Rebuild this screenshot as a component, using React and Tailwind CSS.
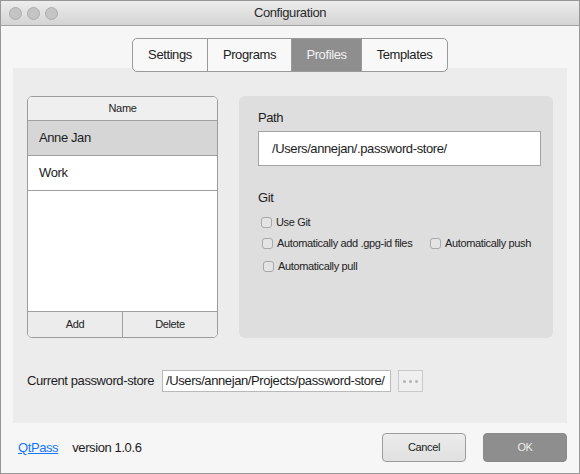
import React from "react";

function Check({ label, className = "" }) {
  return (
    <div className={"flex items-center h-[14px] " + className}>
      <span className="w-[11px] h-[11px] rounded-[3px] border border-[#a8a8a8] bg-[#e4e4e4] shrink-0" />
      <span className="ml-[4px] text-[11px] tracking-[-0.35px] text-[#222] leading-none">{label}</span>
    </div>
  );
}

export default function App() {
  const tabs = [
    { name: "Settings", w: "w-[74px]" },
    { name: "Programs", w: "w-[84px]" },
    { name: "Profiles", w: "w-[70px]", active: true },
    { name: "Templates", w: "w-[86px]" },
  ];
  return (
    <div className="w-[580px] h-[474px] bg-[#f6f6f6] border border-[#979797] flex flex-col overflow-hidden font-['Liberation_Sans',Arial,sans-serif] text-[#1c1c1c]">
      {/* title bar */}
      <div className="h-[25px] shrink-0 border-b border-[#a3a3a3] bg-gradient-to-b from-[#ededed] to-[#d4d4d4] grid grid-cols-[1fr_auto_1fr] items-center">
        <div className="flex items-center gap-[5px] pl-[8px]">
          <span className="w-[13px] h-[13px] rounded-full bg-[#c4c4c4] border border-[#acacac]" />
          <span className="w-[13px] h-[13px] rounded-full bg-[#c4c4c4] border border-[#acacac]" />
          <span className="w-[13px] h-[13px] rounded-full bg-[#c4c4c4] border border-[#acacac]" />
        </div>
        <div className="text-[13px] tracking-[-0.4px] text-[#2a2a2a]">Configuration</div>
        <div />
      </div>

      {/* tabs */}
      <div className="mt-[12px] flex justify-center relative z-10 shrink-0">
        <div className="flex h-[34px] border border-[#9a9a9a] rounded-[5px] overflow-hidden bg-[#f8f8f8]">
          {tabs.map((t, i) => (
            <div
              key={t.name}
              className={
                "flex items-center justify-center text-[13px] tracking-[-0.4px] " +
                t.w +
                (i > 0 ? " border-l border-[#9a9a9a]" : "") +
                (t.active ? " bg-[#8e8e8e] text-[#f2f2f2]" : " text-[#222]")
              }
            >
              {t.name}
            </div>
          ))}
        </div>
      </div>

      {/* pane */}
      <div className="-mt-[4px] mx-[12px] h-[355px] shrink-0 bg-[#ececec] px-[14px] pt-[28px] flex flex-col">
        <div className="flex gap-[21px] h-[242px]">
          {/* list */}
          <div className="w-[191px] h-full border border-[#9c9c9c] rounded-[5px] overflow-hidden flex flex-col bg-white">
            <div className="h-[24px] shrink-0 border-b border-[#a0a0a0] bg-[#efefef] flex items-center justify-center text-[11px] tracking-[-0.35px] text-[#222]">
              Name
            </div>
            <div className="h-[35px] shrink-0 border-b border-[#a0a0a0] bg-[#d6d6d6] flex items-center pl-[11px] text-[13px] tracking-[-0.4px]">
              Anne Jan
            </div>
            <div className="h-[35px] shrink-0 border-b border-[#a0a0a0] flex items-center pl-[11px] text-[13px] tracking-[-0.4px]">
              Work
            </div>
            <div className="flex-1" />
            <div className="h-[26px] shrink-0 border-t border-[#a0a0a0] bg-[#ececec] flex text-[11px] tracking-[-0.35px] text-[#222]">
              <div className="w-[95px] border-r border-[#a0a0a0] flex items-center justify-center">Add</div>
              <div className="flex-1 flex items-center justify-center">Delete</div>
            </div>
          </div>

          {/* right panel */}
          <div className="flex-1 h-full bg-[#dedede] rounded-[6px] pl-[19px] pr-[12px] pt-[14px] flex flex-col">
            <div className="h-[16px] text-[13px] tracking-[-0.4px] leading-[16px]">Path</div>
            <div className="mt-[5px] h-[35px] bg-white border border-[#a3a3a3] flex items-center pl-[13px] text-[13px] tracking-[-0.4px]">
              /Users/annejan/.password-store/
            </div>
            <div className="mt-[24px] h-[16px] text-[13px] tracking-[-0.4px] leading-[16px]">Git</div>
            <Check label="Use Git" className="mt-[9px] ml-[3px]" />
            <div className="mt-[7px] flex">
              <Check label="Automatically add .gpg-id files" className="ml-[4px] w-[168px]" />
              <Check label="Automatically push" />
            </div>
            <Check label="Automatically pull" className="mt-[9px] ml-[5px]" />
          </div>
        </div>

        {/* current store */}
        <div className="mt-[32px] h-[22px] flex items-center">
          <div className="w-[135px] text-[13px] tracking-[-0.4px]">Current password-store</div>
          <div className="w-[229px] h-[22px] bg-white border border-[#b9b9b9] flex items-center pl-[3px] text-[13px] tracking-[-0.4px] whitespace-nowrap overflow-hidden">
            /Users/annejan/Projects/password-store/
          </div>
          <div className="ml-[7px] w-[25px] h-[22px] border border-[#c9c9c9] bg-[#efefef] flex items-center justify-center gap-[3px]">
            <span className="w-[3px] h-[3px] rounded-full bg-[#b3b3b3]" />
            <span className="w-[3px] h-[3px] rounded-full bg-[#b3b3b3]" />
            <span className="w-[3px] h-[3px] rounded-full bg-[#b3b3b3]" />
          </div>
        </div>
      </div>

      {/* footer */}
      <div className="mt-[10px] h-[29px] shrink-0 flex items-center pl-[17px] pr-[12px]">
        <a href="#" className="text-[13px] tracking-[-0.4px] text-[#1677ff] underline">QtPass</a>
        <span className="ml-[14px] text-[13px] tracking-[-0.4px]">version 1.0.6</span>
        <div className="flex-1" />
        <div className="w-[84px] h-[29px] rounded-[4px] border border-[#9c9c9c] bg-gradient-to-b from-[#ececec] to-[#e0e0e0] flex items-center justify-center text-[11px] tracking-[-0.35px] text-[#222]">
          Cancel
        </div>
        <div className="ml-[17px] w-[84px] h-[29px] rounded-[4px] border border-[#8a8a8a] bg-[#8e8e8e] flex items-center justify-center text-[11px] tracking-[-0.35px] text-[#ececec]">
          OK
        </div>
      </div>
    </div>
  );
}
